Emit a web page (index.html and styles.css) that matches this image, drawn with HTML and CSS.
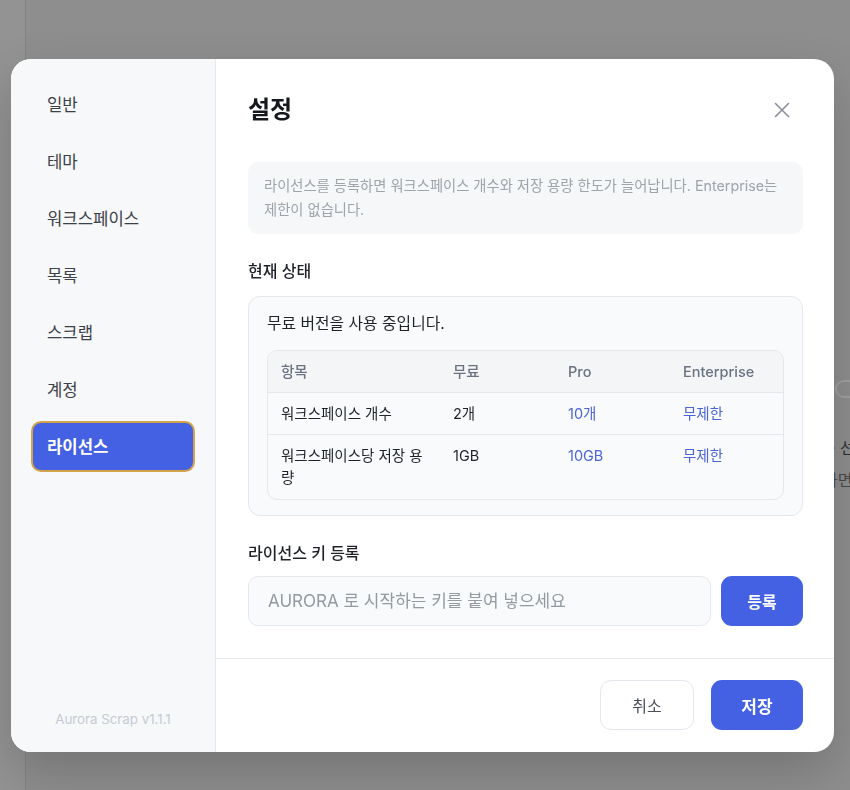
FILE: index.html
```html
<!DOCTYPE html>
<html lang="ko">
<head>
<meta charset="utf-8">
<title>설정</title>
<link rel="stylesheet" href="styles.css">
</head>
<body>
<div class="app">
  <div class="rail"></div>
  <div class="app-main">
    <div class="pill"></div>
    <p class="bg-line bg-line-1">· 선</p>
    <p class="bg-line bg-line-2">하면</p>
  </div>
</div>

<div class="overlay">
  <div class="modal">
    <aside class="sidebar">
      <nav class="nav">
        <div class="nav-item">일반</div>
        <div class="nav-item">테마</div>
        <div class="nav-item">워크스페이스</div>
        <div class="nav-item">목록</div>
        <div class="nav-item">스크랩</div>
        <div class="nav-item">계정</div>
        <div class="nav-item active">라이선스</div>
      </nav>
      <div class="version">Aurora Scrap v1.1.1</div>
    </aside>

    <section class="main">
      <div class="body">
        <div class="head">
          <h1 class="title">설정</h1>
          <button class="close" aria-label="닫기">
            <svg width="16" height="16" viewBox="0 0 16 16" fill="none" stroke="#8a9099" stroke-width="1.6" stroke-linecap="round">
              <path d="M1.5 1.5 L14.5 14.5 M14.5 1.5 L1.5 14.5"/>
            </svg>
          </button>
        </div>

        <div class="info">라이선스를 등록하면 워크스페이스 개수와 저장 용량 한도가 늘어납니다. Enterprise는 제한이 없습니다.</div>

        <h2 class="label label-status">현재 상태</h2>
        <div class="card">
          <p class="card-text">무료 버전을 사용 중입니다.</p>
          <div class="table-wrap">
            <table class="plan">
              <colgroup>
                <col class="c1"><col class="c2"><col class="c3"><col class="c4">
              </colgroup>
              <thead>
                <tr><th>항목</th><th>무료</th><th>Pro</th><th>Enterprise</th></tr>
              </thead>
              <tbody>
                <tr><td>워크스페이스 개수</td><td>2개</td><td class="hl">10개</td><td class="hl">무제한</td></tr>
                <tr><td>워크스페이스당 저장 용량</td><td>1GB</td><td class="hl">10GB</td><td class="hl">무제한</td></tr>
              </tbody>
            </table>
          </div>
        </div>

        <h2 class="label label-key">라이선스 키 등록</h2>
        <div class="key-row">
          <input class="key-input" type="text" placeholder="AURORA 로 시작하는 키를 붙여 넣으세요">
          <button class="btn btn-primary btn-register">등록</button>
        </div>
      </div>

      <footer class="footer">
        <button class="btn btn-ghost">취소</button>
        <button class="btn btn-primary btn-save">저장</button>
      </footer>
    </section>
  </div>
</div>
</body>
</html>
```

FILE: styles.css
```css
* { box-sizing: border-box; }

html, body {
  margin: 0;
  padding: 0;
}

body {
  font-family: Inter, "Noto Sans CJK KR", sans-serif;
  color: #1f2329;
  width: 850px;
  height: 790px;
  overflow: hidden;
}

/* dimmed page behind the dialog */
.app {
  display: flex;
  height: 790px;
  background: #8e8e8e;
}

.rail {
  width: 26px;
  flex: none;
  background: #939393;
  border-right: 1px solid #838383;
}

.app-main {
  flex: 1;
  padding: 380px 0 0 797px;
  overflow: hidden;
  white-space: nowrap;
}

.pill {
  margin-left: 12px;
  width: 40px;
  height: 18px;
  border: 2px solid #a0a0a0;
  border-radius: 9px;
}

.bg-line {
  margin: 0;
  font-size: 16px;
  line-height: 22px;
}

.bg-line-1 { margin-top: 39px; margin-left: 8px; color: #2e2e2e; }
.bg-line-2 { margin-top: 10px; color: #4a4a4a; }

/* dialog overlay */
.overlay {
  position: fixed;
  inset: 0;
  display: flex;
  align-items: flex-start;
  padding: 59px 16px 38px 11px;
}

.modal {
  width: 823px;
  height: 693px;
  display: flex;
  background: #ffffff;
  border-radius: 20px;
  overflow: hidden;
  box-shadow: 0 20px 50px rgba(0, 0, 0, 0.18);
}

/* sidebar */
.sidebar {
  width: 205px;
  flex: none;
  background: #f6f8fa;
  border-right: 1px solid #e6e8eb;
  display: flex;
  flex-direction: column;
  padding: 20px 20px 24px 20px;
}

.nav {
  display: flex;
  flex-direction: column;
  gap: 6px;
}

.nav-item {
  height: 51px;
  display: flex;
  align-items: center;
  padding: 0 14px 1px;
  font-size: 16.7px;
  color: #3c4047;
  border: 2px solid transparent;
  border-radius: 10px;
}

.nav-item.active {
  background: #4361e2;
  border-color: #d2a34a;
  color: #ffffff;
  font-weight: 700;
}

.version {
  margin-top: auto;
  text-align: center;
  font-size: 13.3px;
  color: #c6cbd2;
  line-height: 18px;
}

/* main */
.main {
  flex: 1;
  display: flex;
  flex-direction: column;
  min-width: 0;
}

.body {
  flex: 1;
  padding: 32px 31px 32px 32px;
}

.head {
  display: flex;
  align-items: center;
  justify-content: space-between;
  height: 38px;
}

.title {
  margin: 0;
  font-size: 24px;
  font-weight: 700;
  color: #15181d;
  line-height: 38px;
}

.close {
  width: 42px;
  height: 38px;
  border: 0;
  background: transparent;
  padding: 0;
  display: flex;
  align-items: center;
  justify-content: center;
}

.info {
  margin-top: 33px;
  background: #f5f7f9;
  border-radius: 10px;
  padding: 12px 16px;
  font-size: 14.3px;
  line-height: 24px;
  color: #9ea4ac;
}

.label {
  margin: 0;
  font-size: 16px;
  font-weight: 500;
  line-height: 22px;
  color: #1f2329;
}

.label-status { margin-top: 26px; }
.label-key { margin-top: 26px; }

.card {
  margin-top: 14px;
  background: #f9fafb;
  border: 1px solid #e4e7eb;
  border-radius: 12px;
  padding: 15px 18px 15px 18px;
}

.card-text {
  margin: 0;
  font-size: 15.8px;
  line-height: 24px;
  color: #1f2329;
}

.table-wrap {
  margin-top: 14px;
  border: 1px solid #e4e7eb;
  border-radius: 10px;
  overflow: hidden;
  background: #f9fafb;
}

.plan {
  width: 100%;
  border-collapse: separate;
  border-spacing: 0;
  table-layout: fixed;
  font-size: 14.5px;
}

.c1 { width: 172px; }
.c2 { width: 115px; }
.c3 { width: 115px; }

.plan th,
.plan td {
  text-align: left;
  vertical-align: top;
  padding: 10px 12px 10px 13px;
  line-height: 21px;
}

.plan th {
  background: #f3f5f7;
  font-weight: 500;
  color: #6b7280;
}

.plan td {
  border-top: 1px solid #e4e7eb;
  color: #1f2329;
}

.plan tbody tr:last-child td {
  line-height: 22px;
}

.plan td.hl { color: #4b64d6; }

.key-row {
  margin-top: 12px;
  display: flex;
  gap: 10px;
}

.key-input {
  flex: 1;
  min-width: 0;
  height: 50px;
  border: 1px solid #e4e7eb;
  border-radius: 10px;
  background: #f9fafb;
  padding: 0 19px;
  font-family: inherit;
  font-size: 17px;
  color: #1f2329;
  outline: none;
}

.key-input::placeholder { color: #949aa2; }

.btn {
  height: 50px;
  border-radius: 11px;
  font-family: inherit;
  font-size: 16px;
  cursor: pointer;
}

.btn-primary {
  background: #4361e2;
  border: 0;
  color: #ffffff;
  font-weight: 700;
}

.btn-register { width: 82px; }

.btn-ghost {
  width: 94px;
  background: #ffffff;
  border: 1px solid #e4e7eb;
  color: #4b5058;
}

.btn-save { width: 92px; font-size: 17px; }

.footer {
  border-top: 1px solid #e6e8eb;
  padding: 21px 31px 22px 32px;
  display: flex;
  justify-content: flex-end;
  gap: 17px;
}
```
